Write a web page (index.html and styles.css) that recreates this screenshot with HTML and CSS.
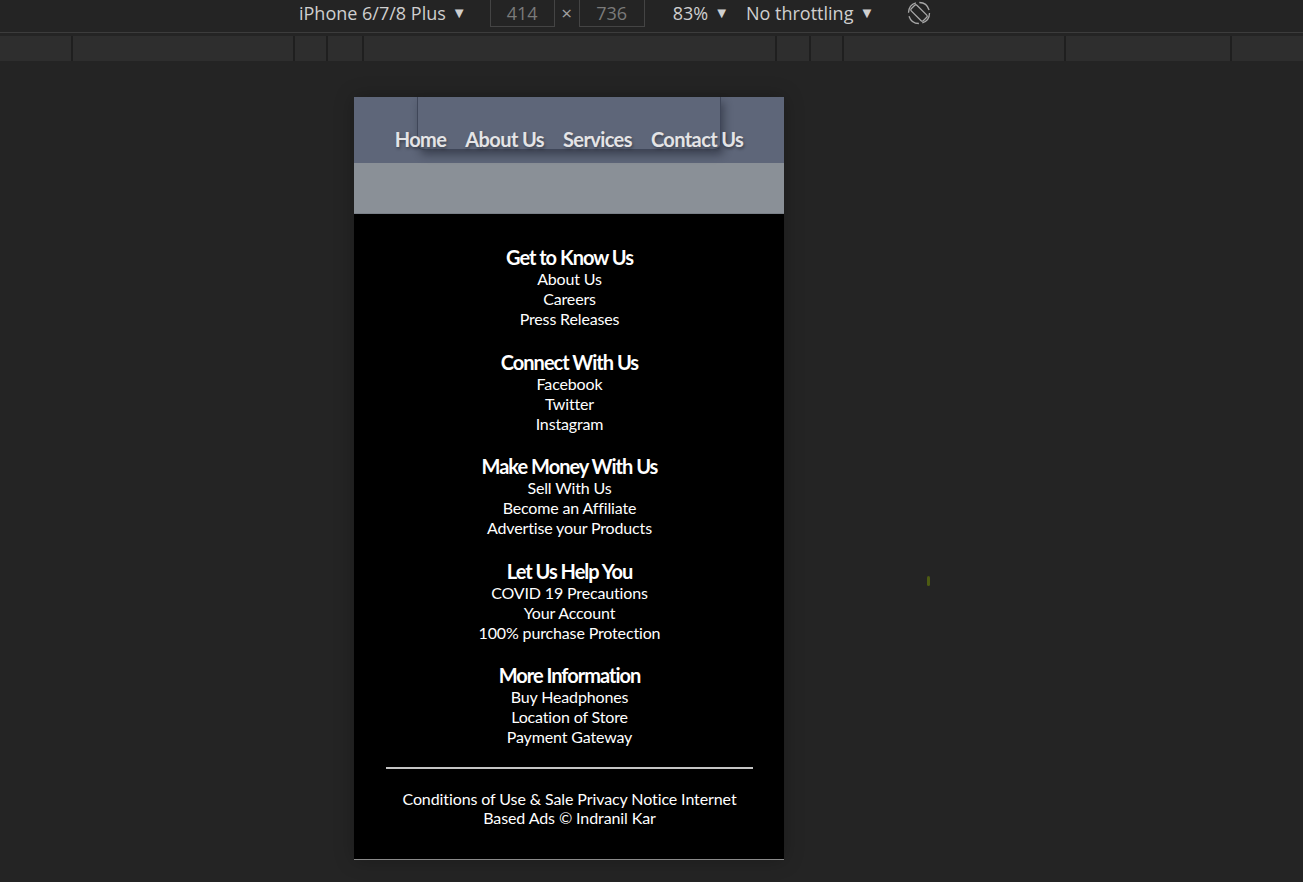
FILE: index.html
```html
<!DOCTYPE html>
<html lang="en">
<head>
<meta charset="utf-8">
<title>Device preview</title>
<link rel="stylesheet" href="styles.css">
</head>
<body>
<div class="app">
  <div class="toolbar">
    <span class="tb-item device-name">iPhone 6/7/8 Plus<span class="caret">▼</span></span>
    <span class="dim-box w65">414</span>
    <span class="times">×</span>
    <span class="dim-box w66">736</span>
    <span class="tb-item zoom">83%<span class="caret">▼</span></span>
    <span class="tb-item throttle">No throttling<span class="caret">▼</span></span>
    <svg class="rotate" width="24" height="24" viewBox="0 0 24 24">
      <circle cx="12" cy="12" r="10.5" fill="none" stroke="#a8a8a8" stroke-width="1.3" stroke-dasharray="13 3.5"/>
      <rect x="8" y="3.5" width="8" height="17" rx="1.5" transform="rotate(-45 12 12)" fill="none" stroke="#a8a8a8" stroke-width="1.3"/>
    </svg>
  </div>
  <div class="media-bar">
    <div class="seg" style="width:73px"></div>
    <div class="seg" style="width:222px"></div>
    <div class="seg" style="width:33px"></div>
    <div class="seg" style="width:36px"></div>
    <div class="seg" style="width:413px"></div>
    <div class="seg" style="width:34px"></div>
    <div class="seg" style="width:33px"></div>
    <div class="seg" style="width:222px"></div>
    <div class="seg" style="width:166px"></div>
    <div class="seg seg-last"></div>
  </div>
  <div class="stage">
    <div class="device">
      <header class="site-header">
        <div class="nav-box"></div>
        <nav class="nav">
          <a>Home</a>
          <a>About Us</a>
          <a>Services</a>
          <a>Contact Us</a>
        </nav>
      </header>
      <div class="band"></div>
      <footer class="site-footer">
        <div class="sections">
          <section class="col">
            <h3>Get to Know Us</h3>
            <a>About Us</a>
            <a>Careers</a>
            <a>Press Releases</a>
          </section>
          <section class="col">
            <h3>Connect With Us</h3>
            <a>Facebook</a>
            <a>Twitter</a>
            <a>Instagram</a>
          </section>
          <section class="col">
            <h3>Make Money With Us</h3>
            <a>Sell With Us</a>
            <a>Become an Affiliate</a>
            <a>Advertise your Products</a>
          </section>
          <section class="col">
            <h3>Let Us Help You</h3>
            <a>COVID 19 Precautions</a>
            <a>Your Account</a>
            <a>100% purchase Protection</a>
          </section>
          <section class="col">
            <h3>More Information</h3>
            <a>Buy Headphones</a>
            <a>Location of Store</a>
            <a>Payment Gateway</a>
          </section>
        </div>
        <hr class="rule">
        <p class="legal">Conditions of Use &amp; Sale Privacy Notice Internet Based Ads © Indranil Kar</p>
      </footer>
    </div>
    <div class="speck"></div>
  </div>
</div>
</body>
</html>
```

FILE: styles.css
```css
* { box-sizing: border-box; }
html, body {
  margin: 0;
  padding: 0;
  background: #242424;
}
.app {
  width: 1303px;
  height: 882px;
  overflow: hidden;
  display: flex;
  flex-direction: column;
  font-family: "Open Sans", "Noto Sans", sans-serif;
}
.toolbar {
  height: 33px;
  flex: none;
  background: #242424;
  border-bottom: 1px solid #3c3c3c;
  display: flex;
  align-items: flex-start;
  padding-left: 299px;
  color: #cfcfcf;
  font-size: 18px;
  line-height: 26px;
}
.caret {
  display: inline-block;
  font-size: 15px;
  margin-left: 6px;
  position: relative;
  top: -2px;
}
.device-name { margin-right: 23px; }
.dim-box {
  height: 27px;
  border: 1px solid #444;
  border-top: none;
  color: #7a7a7a;
  text-align: center;
  font-size: 18px;
  line-height: 26px;
}
.w65 { width: 65px; }
.w66 { width: 66px; }
.times { width: 24px; text-align: center; color: #a0a0a0; font-size: 19px; }
.zoom { margin-left: 28px; margin-right: 17px; }
.throttle { margin-right: 33px; }
.rotate { margin-top: 1px; }
.media-bar {
  margin-top: 3px;
  height: 25px;
  flex: none;
  display: flex;
  background: #2e2e2e;
}
.seg {
  height: 25px;
  border-right: 2px solid #1f1f1f;
  flex: none;
}
.seg-last { flex: 1; border-right: none; }
.stage {
  flex: 1;
  position: relative;
  padding-top: 36px;
  padding-left: 354px;
}
.device {
  width: 430px;
  box-shadow: 0 0 18px rgba(0,0,0,0.25);
}
.site-header {
  height: 66px;
  background: #5e6679;
  position: relative;
  display: flex;
  justify-content: center;
  align-items: flex-start;
  padding-top: 30px;
}
.nav-box {
  position: absolute;
  left: 63px;
  top: 0;
  width: 304px;
  height: 53px;
  border: 1px solid #3f4658;
  border-top: none;
  border-radius: 0 0 6px 6px;
  box-shadow: 3px 5px 9px rgba(20,24,36,0.45);
}
.nav {
  position: relative;
  display: flex;
  gap: 19px;
  font-family: Lato, "Open Sans", sans-serif;
  font-weight: 700;
  font-size: 20px;
  line-height: 24px;
  letter-spacing: -0.6px;
  color: #e4e4e6;
  text-shadow: 1px 2px 3px rgba(0,0,0,0.35);
}
.band {
  height: 51px;
  background: #8a9097;
  border-bottom: 1px solid #7a8088;
}
.site-footer {
  background: #000;
  color: #fff;
  font-family: Lato, "Open Sans", sans-serif;
  text-align: center;
  padding: 31px 31px 31px 32px;
  border-bottom: 1px solid #8a8a8a;
}
.sections {
  display: flex;
  flex-direction: column;
  gap: 20.5px;
}
.col {
  display: flex;
  flex-direction: column;
  align-items: center;
}
.col h3 {
  margin: 0;
  font-size: 20px;
  line-height: 24px;
  font-weight: 700;
  letter-spacing: -1px;
}
.col a {
  font-size: 16px;
  line-height: 20px;
  letter-spacing: -0.15px;
}
.rule {
  margin: 20px 0 0 0;
  border: none;
  height: 2px;
  background: #c4c4c4;
}
.legal {
  margin: 19.5px auto 0;
  width: 345px;
  font-size: 16px;
  line-height: 19px;
  letter-spacing: -0.1px;
  padding-bottom: 1.5px;
}
.speck {
  position: absolute;
  left: 927px;
  top: 515px;
  width: 3px;
  height: 10px;
  border-radius: 2px;
  background: #4d5b12;
}
```
